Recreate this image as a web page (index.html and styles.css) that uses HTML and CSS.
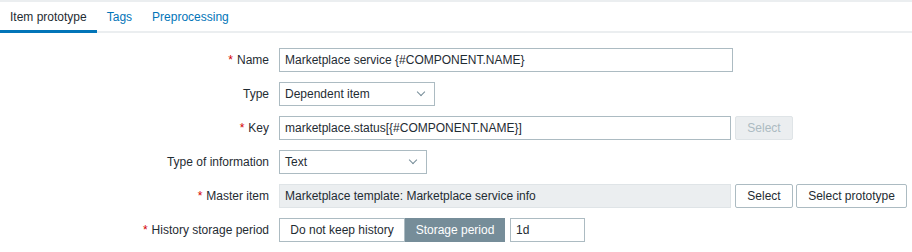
FILE: index.html
```html
<!DOCTYPE html>
<html lang="en">
<head>
    <meta charset="UTF-8">
    <title>Item prototype</title>
    <link rel="stylesheet" href="styles.css">
</head>
<body>
    <div class="tabs">
        <a class="tab active">Item prototype</a>
        <a class="tab">Tags</a>
        <a class="tab">Preprocessing</a>
    </div>

    <div class="form">
        <label class="required">Name</label>
        <div class="field">
            <input class="text w-name" type="text" value="Marketplace service {#COMPONENT.NAME}">
        </div>

        <label>Type</label>
        <div class="field">
            <div class="select w-type">Dependent item<span class="arrow"></span></div>
        </div>

        <label class="required">Key</label>
        <div class="field">
            <input class="text w-key" type="text" value="marketplace.status[{#COMPONENT.NAME}]">
            <button class="btn disabled">Select</button>
        </div>

        <label>Type of information</label>
        <div class="field">
            <div class="select w-info">Text<span class="arrow"></span></div>
        </div>

        <label class="required">Master item</label>
        <div class="field">
            <input class="text readonly w-key" type="text" value="Marketplace template: Marketplace service info" readonly>
            <button class="btn">Select</button>
            <button class="btn wide">Select prototype</button>
        </div>

        <label class="required">History storage period</label>
        <div class="field">
            <div class="radio">
                <span class="radio-item">Do not keep history</span>
                <span class="radio-item checked">Storage period</span>
            </div>
            <input class="text w-period" type="text" value="1d">
        </div>
    </div>
</body>
</html>
```

FILE: styles.css
```css
body {
    margin: 0;
    font-family: "Liberation Sans", Arial, sans-serif;
    font-size: 12px;
    color: #1f2c33;
    background-color: #fff;
}
.tabs {
    display: flex;
    border-top: 2px solid #ebeef0;
    border-bottom: 2px solid #ebeef0;
    height: 29px;
}
.tab {
    padding: 0 10px;
    line-height: 30px;
    color: #0275b8;
    border-bottom: 3px solid transparent;
    margin-bottom: -2px;
    cursor: pointer;
}
.tab.active {
    color: #1f2c33;
    border-bottom-color: #0275b8;
}
.form {
    display: grid;
    grid-template-columns: 269px 1fr;
    column-gap: 10px;
    row-gap: 10px;
    padding-top: 15px;
}
.form label {
    text-align: right;
    line-height: 24px;
    white-space: nowrap;
}
.form label.required::before {
    content: "*";
    color: #d40000;
    margin-right: 4px;
}
.field {
    display: flex;
    align-items: center;
    gap: 3px;
    height: 24px;
}
.text, .select {
    box-sizing: border-box;
    height: 24px;
    border: 1px solid #acbbc2;
    padding: 0 5px;
    font-family: inherit;
    font-size: 12px;
    color: #1f2c33;
    background-color: #fff;
    outline: none;
    margin: 0;
}
.text.readonly {
    background-color: #ebeef0;
    border-color: #dfe4e7;
}
.select {
    position: relative;
    line-height: 22px;
}
.select .arrow {
    position: absolute;
    right: 10px;
    top: 6px;
    width: 5px;
    height: 5px;
    border-right: 1px solid #768d99;
    border-bottom: 1px solid #768d99;
    transform: rotate(45deg);
}
.w-name { width: 454px; }
.w-key { width: 452px; margin-right: 1px; }
.w-type { width: 156px; }
.w-info { width: 148px; }
.w-period { width: 75px; margin-left: 2px; }
.btn {
    box-sizing: border-box;
    height: 24px;
    width: 58px;
    padding: 0;
    border: 1px solid #acbbc2;
    border-radius: 2px;
    background-color: #fff;
    color: #1f2c33;
    font-family: inherit;
    font-size: 12px;
    white-space: nowrap;
    cursor: pointer;
    margin: 0;
}
.btn.wide {
    width: 111px;
}
.btn.disabled {
    background-color: #ebeef0;
    border-color: #dfe4e7;
    color: #acbbc2;
    cursor: default;
}
.radio {
    display: flex;
}
.radio-item {
    box-sizing: border-box;
    height: 24px;
    line-height: 22px;
    border: 1px solid #acbbc2;
    width: 126px;
    text-align: center;
    white-space: nowrap;
}
.radio-item.checked {
    width: 100px;
    background-color: #768d99;
    border-color: #768d99;
    color: #fff;
}
```
